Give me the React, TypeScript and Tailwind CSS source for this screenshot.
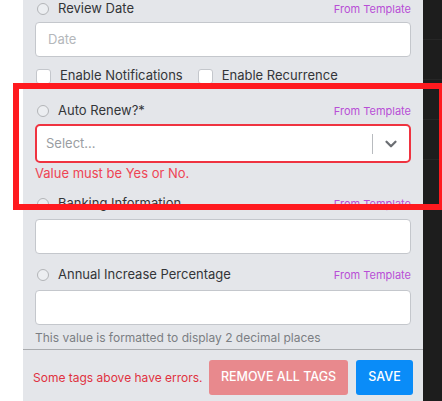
import { ChevronDown } from "lucide-react"

function FieldLabel({ text, className = "" }: { text: string; className?: string }) {
  return (
    <div className={`flex items-center h-[20px] ${className}`}>
      <span className="ml-[2px] w-[12px] h-[12px] rounded-full border-[1.5px] border-[#b3b5b8] bg-[#eceef1]" />
      <span className="ml-[9px] text-[13px] text-[#333538]">{text}</span>
      <span className="ml-auto text-[11px] text-[#b84fd6]">From Template</span>
    </div>
  )
}

function TextBox({ placeholder, className = "" }: { placeholder?: string; className?: string }) {
  return (
    <div
      className={`h-[35px] bg-white border border-[#c4c7cc] rounded-[4px] flex items-center px-[12px] text-[13px] text-[#b4b7bb] ${className}`}
    >
      {placeholder}
    </div>
  )
}

function Check({ label }: { label: string }) {
  return (
    <div className="flex items-center">
      <span className="w-[15px] h-[15px] bg-white border border-[#c4c7cc] rounded-[3px]" />
      <span className="ml-[9px] text-[13px] text-[#333538]">{label}</span>
    </div>
  )
}

export default function App() {
  return (
    <div
      className="relative flex w-[442px] h-[401px] overflow-hidden bg-white"
      style={{ fontFamily: "Inter, 'Noto Sans', sans-serif" }}
    >
      <div className="w-[23px] shrink-0 bg-white" />

      <div className="w-[400px] shrink-0 bg-[#e4e6ea] flex flex-col">
        <div className="px-[12px] flex flex-col pb-[3px]">
          <FieldLabel text="Review Date" className="-mt-[1px]" />
          <TextBox placeholder="Date" className="mt-[3px]" />

          <div className="flex items-center h-[20px] mt-[9px] gap-[15px] pl-[1px]">
            <Check label="Enable Notifications" />
            <Check label="Enable Recurrence" />
          </div>

          <FieldLabel text="Auto Renew?*" className="mt-[15px]" />
          <div className="mt-[3px] h-[39px] bg-white border-2 border-[#ef3340] rounded-[5px] flex items-center pl-[9px]">
            <span className="text-[13px] text-[#9a9da2]">Select...</span>
            <span className="ml-auto w-px h-[20px] bg-[#b8bbbf]" />
            <span className="w-[36px] flex justify-center">
              <ChevronDown size={18} strokeWidth={3} className="text-[#6b6e73]" />
            </span>
          </div>
          <div className="mt-px h-[20px] flex items-center text-[13px] text-[#ee4454]">
            Value must be Yes or No.
          </div>

          <FieldLabel text="Banking Information" className="mt-[10px]" />
          <TextBox className="mt-[5px]" />

          <FieldLabel text="Annual Increase Percentage" className="mt-[11px]" />
          <TextBox className="mt-[5px]" />

          <div className="mt-[5px] h-[16px] flex items-center text-[12px] text-[#7b7e83]">
            This value is formatted to display 2 decimal places
          </div>
        </div>

        <div className="border-t border-[#a9abae] flex items-center pl-[10px] pr-[10px] pt-[10px] pb-[7px]">
          <span className="text-[12px] text-[#e0323f] whitespace-nowrap">Some tags above have errors.</span>
          <button className="ml-auto shrink-0 h-[35px] w-[139px] bg-[#e8898d] rounded-[3px] text-white text-[12.5px] font-medium whitespace-nowrap">
            REMOVE ALL TAGS
          </button>
          <button className="ml-[8px] shrink-0 h-[35px] w-[57px] bg-[#0a8cf8] rounded-[3px] text-white text-[12.5px] font-medium">
            SAVE
          </button>
        </div>
      </div>

      <div className="flex-1 bg-[#1d1d1d] flex flex-col">
        <div className="h-[40px] border-b border-[#262626]" />
        <div className="h-[40px] border-b border-[#262626]" />
        <div className="h-[40px] border-b border-[#262626]" />
        <div className="h-[40px] border-b border-[#262626]" />
      </div>

      <div className="absolute left-[13px] top-[83px] w-[432px] h-[127px] border-[6px] border-[#ff1a1f]" />
    </div>
  )
}
